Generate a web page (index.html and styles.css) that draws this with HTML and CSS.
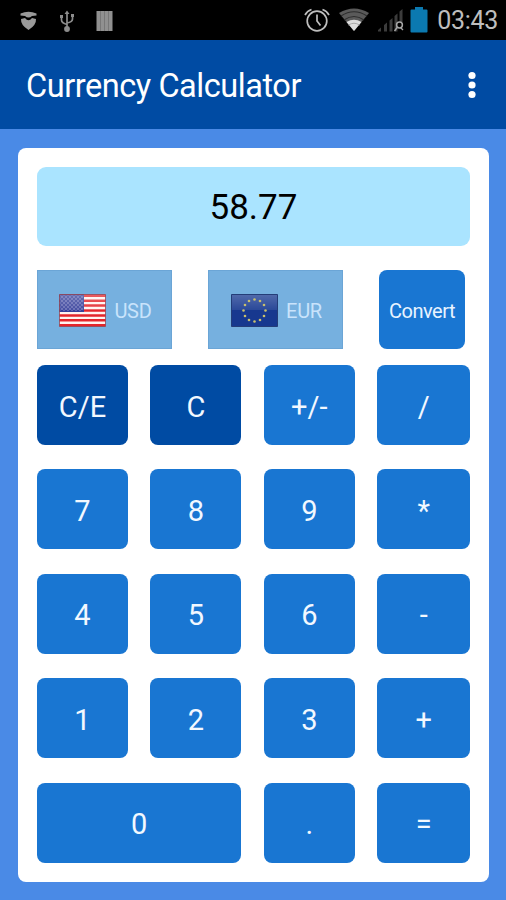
FILE: index.html
```html
<!DOCTYPE html>
<html lang="en">
  <head>
    <meta charset="UTF-8" />
    <meta name="viewport" content="width=device-width, initial-scale=1.0" />
    <title>Currency Calculator</title>
    <link rel="stylesheet" href="styles.css">
  </head>
  <body>
    <div class="status-bar">
      <div class="status-left">
        <svg width="17" height="20" viewBox="0 0 17 20" fill="#9a9a9a">
          <path d="M.5 2.500Q8.500 -1 16.500 2.500V4.500L12 5Q8.500 8 5 5L.5 4.500Z" />
          <path d="M1 8L5 7Q8.500 11.500 12 7L16 8Q16.500 14 8.500 19Q.5 14 1 8Z" />
        </svg>
        <svg width="16" height="22" viewBox="0 0 16 22" fill="none" stroke="#8c8c8c" stroke-width="1.700">
          <path d="M8 3V19M2.500 7V10Q2.500 13 8 14.500M13.500 6V9Q13.500 12 8 13" />
          <path d="M8 .5L10.500 4H5.500ZM1 5h3v3H1ZM12 4h3v3h-3Z" fill="#8c8c8c" stroke="none" />
          <circle cx="8" cy="19" r="2.900" fill="#8c8c8c" stroke="none" />
        </svg>
        <svg width="17" height="20" viewBox="0 0 17 20">
          <path d="M.5 0H16.500V20H.5Z" fill="#909090" />
          <path d="M4.500 0V20M8.500 0V20M12.500 0V20" stroke="#777" stroke-width="1" />
        </svg>
      </div>
      <div class="status-right">
        <svg width="26" height="24" viewBox="0 0 26 24" fill="none" stroke="#bebebe" stroke-width="1.700">
          <circle cx="13" cy="13" r="9.800" />
          <path d="M13 6.500V13L16.500 17.500M1 7Q3 3 7.500 1.500M25 7Q23 3 18.500 1.500" />
        </svg>
        <svg width="30" height="24" viewBox="0 0 30 24">
          <path d="M15 23L0 5Q15 -4 30 5Z" fill="#5a5a5a" />
          <path d="M15 23L7.500 14Q15 9.500 22.500 14Z" fill="#dedede" />
          <path d="M2 8Q15 -.5 28 8M5 12Q15 5 25 12" fill="none" stroke="#2c2c2c" stroke-width="1.200" />
          <path d="M9.500 17Q15 13.500 20.500 17" fill="none" stroke="#aaa" stroke-width="1" />
        </svg>
        <svg width="26" height="25" viewBox="0 0 26 25">
          <path d="M0 23.500V22L3 19.500V23.500ZM6 23.500V17L9 14.500V23.500ZM11.500 23.500V12.500L14.500 10V23.500ZM16.500 23.500V8L19.500 5.500V23.500ZM21.500 14V3.500L24.500 1V14Z" fill="#3c3c3c" />
          <circle cx="21.500" cy="17" r="2.900" fill="#000" stroke="#a8a8a8" stroke-width="1.500" />
          <path d="M19.500 19L16.500 23M22.500 19.500L25 22" stroke="#a8a8a8" stroke-width="1.400" />
        </svg>
        <svg width="18" height="26" viewBox="0 0 18 26">
          <path d="M5 0h8v2.500h3.500q1 0 1 1V24.500q0 1-1 1H1.500q-1 0-1-1V3.500q0-1 1-1H5Z" fill="#0b79b0" />
        </svg>
        <span class="clock">03:43</span>
      </div>
    </div>

    <header class="app-bar">
      <h1>Currency Calculator</h1>
      <button class="menu-btn" aria-label="Menu">
        <svg width="8" height="28" viewBox="0 0 8 28" fill="#fff">
          <circle cx="4" cy="4.500" r="3.600" />
          <circle cx="4" cy="14" r="3.600" />
          <circle cx="4" cy="23.500" r="3.600" />
        </svg>
      </button>
    </header>

    <main class="calculator">
      <div class="display">58.77</div>

      <div class="currency-row">
        <button class="currency-btn">
          <svg width="47" height="33" viewBox="0 0 47 33">
            <defs>
              <linearGradient id="shine" x1="0" y1="0" x2="0" y2="1">
                <stop offset="0" stop-color="#fff" stop-opacity=".25" />
                <stop offset=".5" stop-color="#fff" stop-opacity=".08" />
                <stop offset=".5" stop-color="#fff" stop-opacity="0" />
              </linearGradient>
              <pattern id="stars" width="4" height="4" patternUnits="userSpaceOnUse">
                <circle cx="1" cy="1" r=".7" fill="#a9a8da" />
                <circle cx="3" cy="3" r=".7" fill="#a9a8da" />
              </pattern>
            </defs>
            <path d="M.5 .5H46.500V32.500H.5Z" fill="#fff3f0" />
            <path d="M.5 1.700H46.500M.5 6.700H46.500M.5 11.600H46.500M.5 16.500H46.500M.5 21.400H46.500M.5 26.300H46.500M.5 31.200H46.500" stroke="#e3262b" stroke-width="2.500" />
            <path d="M.5 .5H25V18H.5Z" fill="#36409a" />
            <path d="M1.500 1.500H24V17H1.500Z" fill="url(#stars)" />
            <path d="M.5 .5H46.500V32.500H.5Z" fill="url(#shine)" stroke="#863848" stroke-opacity=".7" />
          </svg>
          <span>USD</span>
        </button>
        <button class="currency-btn">
          <svg width="47" height="33" viewBox="0 0 47 33">
            <path d="M.5 .5H46.500V32.500H.5Z" fill="#17388f" />
            <path d="M.5 .5H46.500V32.500H.5Z" fill="url(#shine)" stroke="#243d78" />
            <g fill="#c9bf6c">
              <circle cx="23.500" cy="5.500" r="1.300" />
              <circle cx="29" cy="7" r="1.300" />
              <circle cx="33" cy="11" r="1.300" />
              <circle cx="34.500" cy="16.500" r="1.300" />
              <circle cx="33" cy="22" r="1.300" />
              <circle cx="29" cy="26" r="1.300" />
              <circle cx="23.500" cy="27.500" r="1.300" />
              <circle cx="18" cy="26" r="1.300" />
              <circle cx="14" cy="22" r="1.300" />
              <circle cx="12.500" cy="16.500" r="1.300" />
              <circle cx="14" cy="11" r="1.300" />
              <circle cx="18" cy="7" r="1.300" />
            </g>
          </svg>
          <span>EUR</span>
        </button>
        <button class="convert-btn">Convert</button>
      </div>

      <div class="keypad">
        <button class="key clear">C/E</button>
        <button class="key clear">C</button>
        <button class="key">+/-</button>
        <button class="key">/</button>
        <button class="key">7</button>
        <button class="key">8</button>
        <button class="key">9</button>
        <button class="key">*</button>
        <button class="key">4</button>
        <button class="key">5</button>
        <button class="key">6</button>
        <button class="key">-</button>
        <button class="key">1</button>
        <button class="key">2</button>
        <button class="key">3</button>
        <button class="key">+</button>
        <button class="key zero">0</button>
        <button class="key">.</button>
        <button class="key">=</button>
      </div>
    </main>
  </body>
</html>
```

FILE: styles.css
```css
* {
  margin: 0;
  padding: 0;
  box-sizing: border-box;
  font-family: Roboto, Arial, sans-serif;
}

body {
  background-color: #4a8ae6;
  min-height: 100vh;
}

svg {
  display: block;
  flex-shrink: 0;
}

button {
  border: none;
  cursor: pointer;
}

.status-bar {
  display: flex;
  justify-content: space-between;
  align-items: center;
  height: 40px;
  padding: 0 8px 0 20px;
  background-color: #000;
}

.status-left {
  display: flex;
  align-items: center;
  gap: 22px;
  padding-top: 1px;
}

.status-left svg:last-child {
  margin-left: -1px;
}

.status-right {
  display: flex;
  align-items: center;
  gap: 9px;
}

.status-right svg:nth-child(4) {
  margin-left: -3px;
}

.clock {
  color: #bebebe;
  font-size: 25px;
  line-height: 38px;
  padding-top: 2px;
  letter-spacing: -0.300px;
}

.app-bar {
  display: flex;
  justify-content: space-between;
  align-items: center;
  height: 89px;
  padding: 0 30px 0 26px;
  background-color: #004ba3;
}

.app-bar h1 {
  padding-top: 2px;
  color: #fff;
  font-size: 32.500px;
  font-weight: 400;
  letter-spacing: -0.450px;
}

.menu-btn {
  background: none;
}

.calculator {
  width: 471px;
  margin: 19px 0 0 18px;
  padding: 19px 19px 19px;
  background-color: #fff;
  border-radius: 8px;
}

.display {
  height: 79px;
  background-color: #aae4ff;
  border-radius: 9px;
  color: #000;
  font-size: 35px;
  line-height: 82px;
  text-align: center;
}

.currency-row {
  display: flex;
  margin-top: 24px;
  gap: 36px;
}

.currency-btn {
  display: flex;
  align-items: center;
  justify-content: center;
  gap: 8px;
  width: 135px;
  height: 79px;
  padding: 1px 0 0 2px;
  background-color: #76b0df;
  border: 1px solid #6ba5d6;
  color: #c9e3fb;
  font-size: 20px;
  letter-spacing: -0.300px;
}

.currency-btn span {
  padding-top: 1px;
}

.convert-btn {
  width: 86px;
  height: 79px;
  padding-top: 3px;
  background-color: #1976d2;
  border-radius: 8px;
  color: #e8f3ff;
  font-size: 20px;
  letter-spacing: -0.500px;
}

.keypad {
  display: grid;
  grid-template-columns: 91px 91px 91px 93px;
  grid-auto-rows: 80px;
  gap: 24.400px 22.400px;
  margin-top: 16px;
}

.key {
  padding-top: 3px;
  background-color: #1976d2;
  border-radius: 8px;
  color: #f2f8ff;
  font-size: 29px;
}

.key.clear {
  background-color: #004ba3;
}

.key.zero {
  grid-column: span 2;
}
```
